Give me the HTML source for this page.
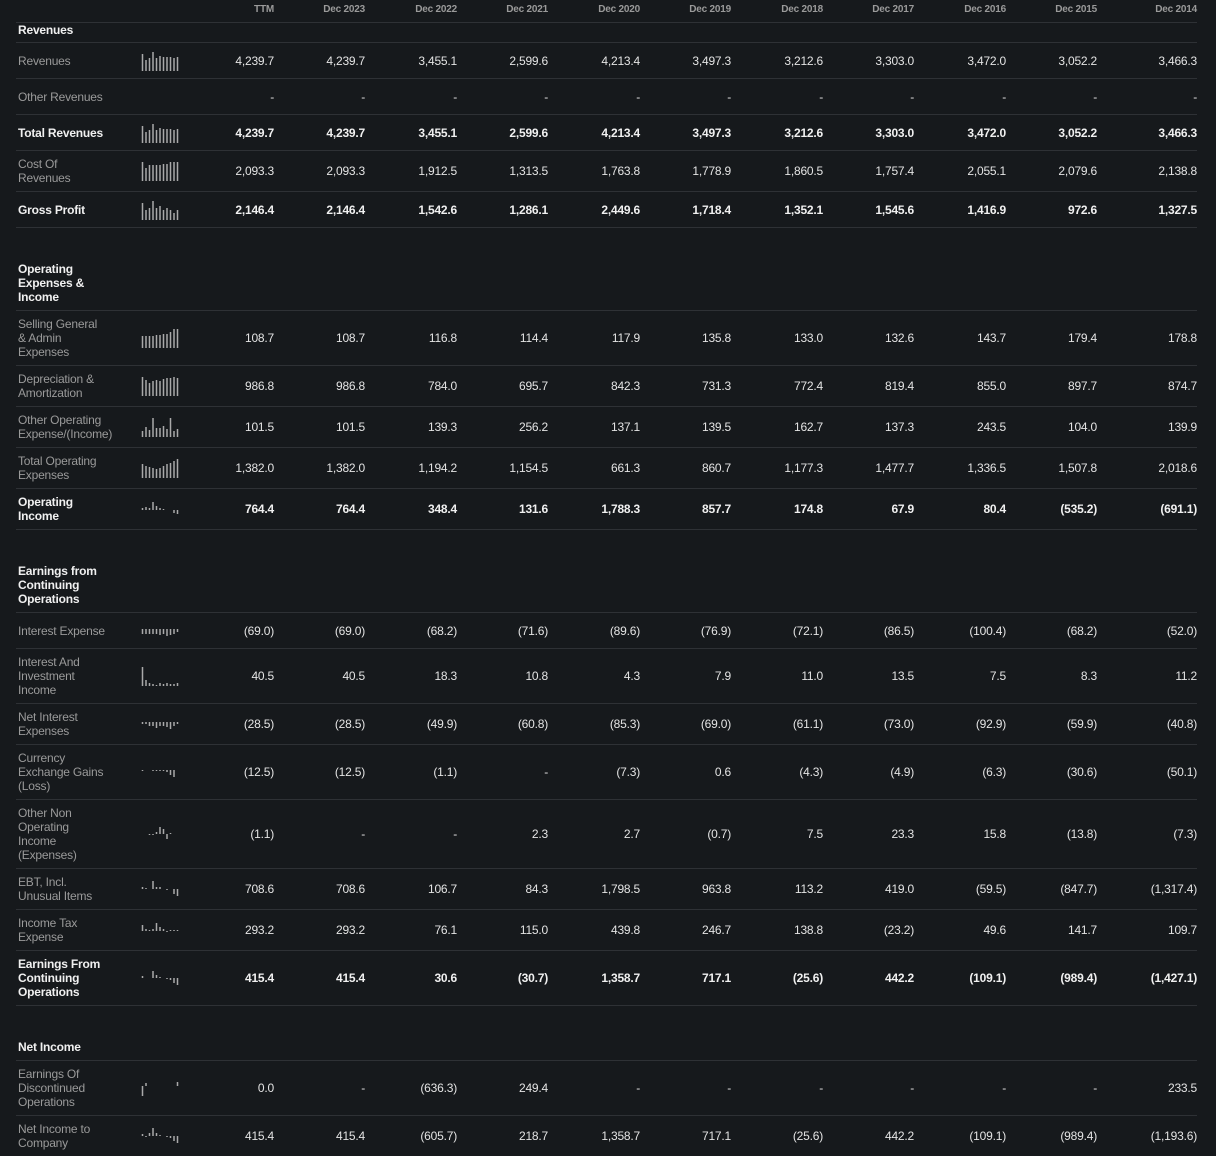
<!DOCTYPE html>
<html><head><meta charset="utf-8">
<style>
*{margin:0;padding:0;box-sizing:border-box}
body{width:1216px;height:1155px;background:#16191c;font-family:"Liberation Sans",Arial,sans-serif;font-size:12px;color:#e4e4e4;position:relative;overflow:hidden}
.r{position:absolute;left:16px;width:1181px;border-bottom:1px solid #2e3135;display:grid;grid-template-columns:2px 123px 40px 93px 91px 92px 91px 92px 91px 92px 91px 92px 91px 100px;align-items:center;letter-spacing:-0.2px}
.r>div{text-align:right;white-space:nowrap}
.r>div.l{text-align:left;color:#9a9a9a;line-height:14px}
.r>div.s{text-align:left}
.b>div{font-weight:bold;color:#f0f0f0}
.b>div.l{color:#f0f0f0}
.h{align-items:end;padding-bottom:6px}
.h>div.l{color:#f0f0f0;font-weight:bold}
.hd>div{font-size:10px;font-weight:bold;color:#9a9a9a}
svg{display:block}
svg path{stroke:#a9a9a9;stroke-width:1.5;fill:none}
</style></head><body>

<div class="r hd" style="top:0;height:23px;align-items:start;padding-top:4px"><div></div><div></div><div></div><div>TTM</div><div>Dec 2023</div><div>Dec 2022</div><div>Dec 2021</div><div>Dec 2020</div><div>Dec 2019</div><div>Dec 2018</div><div>Dec 2017</div><div>Dec 2016</div><div>Dec 2015</div><div>Dec 2014</div></div>

<div class="r h" style="top:23px;height:20px;padding-bottom:6px"><div></div><div class="l">Revenues</div></div>

<div class="r" style="top:43px;height:36px"><div></div><div class="l">Revenues</div><div class="s"><svg width="40" height="24"><path d="M1.5 22V5M5 22V11M8.5 22V9M12 22V3M15.5 22V9M19 22V7M22.5 22V8M26 22V8M29.5 22V8M33 22V9M36.5 22V8"/></svg></div><div>4,239.7</div><div>4,239.7</div><div>3,455.1</div><div>2,599.6</div><div>4,213.4</div><div>3,497.3</div><div>3,212.6</div><div>3,303.0</div><div>3,472.0</div><div>3,052.2</div><div>3,466.3</div></div>

<div class="r" style="top:79px;height:36px"><div></div><div class="l">Other Revenues</div><div></div><div>-</div><div>-</div><div>-</div><div>-</div><div>-</div><div>-</div><div>-</div><div>-</div><div>-</div><div>-</div><div>-</div></div>

<div class="r b" style="top:115px;height:36px"><div></div><div class="l">Total Revenues</div><div class="s"><svg width="40" height="24"><path d="M1.5 22V5M5 22V11M8.5 22V9M12 22V3M15.5 22V9M19 22V7M22.5 22V8M26 22V8M29.5 22V8M33 22V9M36.5 22V8"/></svg></div><div>4,239.7</div><div>4,239.7</div><div>3,455.1</div><div>2,599.6</div><div>4,213.4</div><div>3,497.3</div><div>3,212.6</div><div>3,303.0</div><div>3,472.0</div><div>3,052.2</div><div>3,466.3</div></div>

<div class="r" style="top:151px;height:41px"><div></div><div class="l">Cost Of<br>Revenues</div><div class="s"><svg width="40" height="24"><path d="M1.5 22V3M5 22V9M8.5 22V6M12 22V6M15.5 22V6M19 22V6M22.5 22V5M26 22V5M29.5 22V3M33 22V3M36.5 22V3"/></svg></div><div>2,093.3</div><div>2,093.3</div><div>1,912.5</div><div>1,313.5</div><div>1,763.8</div><div>1,778.9</div><div>1,860.5</div><div>1,757.4</div><div>2,055.1</div><div>2,079.6</div><div>2,138.8</div></div>

<div class="r b" style="top:192px;height:36px"><div></div><div class="l">Gross Profit</div><div class="s"><svg width="40" height="24"><path d="M1.5 22V5M5 22V12M8.5 22V10M12 22V3M15.5 22V10M19 22V8M22.5 22V12M26 22V10M29.5 22V12M33 22V15M36.5 22V12"/></svg></div><div>2,146.4</div><div>2,146.4</div><div>1,542.6</div><div>1,286.1</div><div>2,449.6</div><div>1,718.4</div><div>1,352.1</div><div>1,545.6</div><div>1,416.9</div><div>972.6</div><div>1,327.5</div></div>

<div class="r h" style="top:228px;height:83px"><div></div><div class="l">Operating<br>Expenses &amp;<br>Income</div></div>

<div class="r" style="top:311px;height:55px"><div></div><div class="l">Selling General<br>&amp; Admin<br>Expenses</div><div class="s"><svg width="40" height="24"><path d="M1.5 22V10M5 22V10M8.5 22V10M12 22V10M15.5 22V9M19 22V9M22.5 22V8M26 22V8M29.5 22V6M33 22V3M36.5 22V3"/></svg></div><div>108.7</div><div>108.7</div><div>116.8</div><div>114.4</div><div>117.9</div><div>135.8</div><div>133.0</div><div>132.6</div><div>143.7</div><div>179.4</div><div>178.8</div></div>

<div class="r" style="top:366px;height:41px"><div></div><div class="l">Depreciation &amp;<br>Amortization</div><div class="s"><svg width="40" height="24"><path d="M1.5 22V3M5 22V6M8.5 22V9M12 22V7M15.5 22V6M19 22V7M22.5 22V5M26 22V4M29.5 22V4M33 22V3M36.5 22V4"/></svg></div><div>986.8</div><div>986.8</div><div>784.0</div><div>695.7</div><div>842.3</div><div>731.3</div><div>772.4</div><div>819.4</div><div>855.0</div><div>897.7</div><div>874.7</div></div>

<div class="r" style="top:407px;height:41px"><div></div><div class="l">Other Operating<br>Expense/(Income)</div><div class="s"><svg width="40" height="24"><path d="M1.5 22V16M5 22V12M8.5 22V15M12 22V3M15.5 22V13M19 22V13M22.5 22V11M26 22V14M29.5 22V3M33 22V16M36.5 22V14"/></svg></div><div>101.5</div><div>101.5</div><div>139.3</div><div>256.2</div><div>137.1</div><div>139.5</div><div>162.7</div><div>137.3</div><div>243.5</div><div>104.0</div><div>139.9</div></div>

<div class="r" style="top:448px;height:41px"><div></div><div class="l">Total Operating<br>Expenses</div><div class="s"><svg width="40" height="24"><path d="M1.5 22V8M5 22V10M8.5 22V11M12 22V12M15.5 22V13M19 22V12M22.5 22V10M26 22V8M29.5 22V7M33 22V5M36.5 22V3"/></svg></div><div>1,382.0</div><div>1,382.0</div><div>1,194.2</div><div>1,154.5</div><div>661.3</div><div>860.7</div><div>1,177.3</div><div>1,477.7</div><div>1,336.5</div><div>1,507.8</div><div>2,018.6</div></div>

<div class="r b" style="top:489px;height:41px"><div></div><div class="l">Operating<br>Income</div><div class="s"><svg width="40" height="24"><path d="M1.5 13V11M5 13V10M8.5 13V11M12 13V5M15.5 13V9M19 13V11M22.5 13V12M33 13V16M36.5 13V17"/></svg></div><div>764.4</div><div>764.4</div><div>348.4</div><div>131.6</div><div>1,788.3</div><div>857.7</div><div>174.8</div><div>67.9</div><div>80.4</div><div>(535.2)</div><div>(691.1)</div></div>

<div class="r h" style="top:530px;height:83px"><div></div><div class="l">Earnings from<br>Continuing<br>Operations</div></div>

<div class="r" style="top:613px;height:36px"><div></div><div class="l">Interest Expense</div><div class="s"><svg width="40" height="24"><path d="M1.5 10V15M5 10V15M8.5 10V15M12 10V15M15.5 10V15M19 10V16M22.5 10V15M26 10V17M29.5 10V16M33 10V15M36.5 10V13"/></svg></div><div>(69.0)</div><div>(69.0)</div><div>(68.2)</div><div>(71.6)</div><div>(89.6)</div><div>(76.9)</div><div>(72.1)</div><div>(86.5)</div><div>(100.4)</div><div>(68.2)</div><div>(52.0)</div></div>

<div class="r" style="top:649px;height:55px"><div></div><div class="l">Interest And<br>Investment<br>Income</div><div class="s"><svg width="40" height="24"><path d="M1.5 22V3M5 22V16M8.5 22V19M12 22V20M15.5 22V21M19 22V19M22.5 22V20M26 22V19M29.5 22V20M33 22V20M36.5 22V19"/></svg></div><div>40.5</div><div>40.5</div><div>18.3</div><div>10.8</div><div>4.3</div><div>7.9</div><div>11.0</div><div>13.5</div><div>7.5</div><div>8.3</div><div>11.2</div></div>

<div class="r" style="top:704px;height:41px"><div></div><div class="l">Net Interest<br>Expenses</div><div class="s"><svg width="40" height="24"><path d="M1.5 10V12M5 10V12M8.5 10V14M12 10V14M15.5 10V16M19 10V14M22.5 10V14M26 10V15M29.5 10V17M33 10V14M36.5 10V12"/></svg></div><div>(28.5)</div><div>(28.5)</div><div>(49.9)</div><div>(60.8)</div><div>(85.3)</div><div>(69.0)</div><div>(61.1)</div><div>(73.0)</div><div>(92.9)</div><div>(59.9)</div><div>(40.8)</div></div>

<div class="r" style="top:745px;height:55px"><div></div><div class="l">Currency<br>Exchange Gains<br>(Loss)</div><div class="s"><svg width="40" height="24"><path d="M1.5 10V11M12 10V11M15.5 10V11M19 10V11M22.5 10V11M26 10V12M29.5 10V15M33 10V17"/></svg></div><div>(12.5)</div><div>(12.5)</div><div>(1.1)</div><div>-</div><div>(7.3)</div><div>0.6</div><div>(4.3)</div><div>(4.9)</div><div>(6.3)</div><div>(30.6)</div><div>(50.1)</div></div>

<div class="r" style="top:800px;height:69px"><div></div><div class="l">Other Non<br>Operating<br>Income<br>(Expenses)</div><div class="s"><svg width="40" height="24"><path d="M8.5 12V13M12 12V13M15.5 12V10M19 12V5M22.5 12V7M26 12V17M29.5 12V11"/></svg></div><div>(1.1)</div><div>-</div><div>-</div><div>2.3</div><div>2.7</div><div>(0.7)</div><div>7.5</div><div>23.3</div><div>15.8</div><div>(13.8)</div><div>(7.3)</div></div>

<div class="r" style="top:869px;height:41px"><div></div><div class="l">EBT, Incl.<br>Unusual Items</div><div class="s"><svg width="40" height="24"><path d="M1.5 12V10M5 12V11M12 12V4M15.5 12V10M19 12V10M26 12V13M33 12V17M36.5 12V19"/></svg></div><div>708.6</div><div>708.6</div><div>106.7</div><div>84.3</div><div>1,798.5</div><div>963.8</div><div>113.2</div><div>419.0</div><div>(59.5)</div><div>(847.7)</div><div>(1,317.4)</div></div>

<div class="r" style="top:910px;height:41px"><div></div><div class="l">Income Tax<br>Expense</div><div class="s"><svg width="40" height="24"><path d="M1.5 13V7M5 13V11M8.5 13V12M12 13V11M15.5 13V5M19 13V9M22.5 13V11M26 13V14M29.5 13V12M33 13V12M36.5 13V12"/></svg></div><div>293.2</div><div>293.2</div><div>76.1</div><div>115.0</div><div>439.8</div><div>246.7</div><div>138.8</div><div>(23.2)</div><div>49.6</div><div>141.7</div><div>109.7</div></div>

<div class="r b" style="top:951px;height:55px"><div></div><div class="l">Earnings From<br>Continuing<br>Operations</div><div class="s"><svg width="40" height="24"><path d="M1.5 12V10M12 12V5M15.5 12V9M19 12V11M26 12V13M29.5 12V14M33 12V17M36.5 12V19"/></svg></div><div>415.4</div><div>415.4</div><div>30.6</div><div>(30.7)</div><div>1,358.7</div><div>717.1</div><div>(25.6)</div><div>442.2</div><div>(109.1)</div><div>(989.4)</div><div>(1,427.1)</div></div>

<div class="r h" style="top:1006px;height:55px"><div></div><div class="l">Net Income</div></div>

<div class="r" style="top:1061px;height:55px"><div></div><div class="l">Earnings Of<br>Discontinued<br>Operations</div><div class="s"><svg width="40" height="24"><path d="M1.5 20V10M5 10V7M36.5 10V6"/></svg></div><div>0.0</div><div>-</div><div>(636.3)</div><div>249.4</div><div>-</div><div>-</div><div>-</div><div>-</div><div>-</div><div>-</div><div>233.5</div></div>

<div class="r" style="top:1116px;height:40px;border-bottom:none"><div></div><div class="l">Net Income to<br>Company</div><div class="s"><svg width="40" height="24"><path d="M1.5 12V10M5 12V13M8.5 12V9M12 12V4M15.5 12V9M19 12V11M26 12V13M29.5 12V14M33 12V17M36.5 12V19"/></svg></div><div>415.4</div><div>415.4</div><div>(605.7)</div><div>218.7</div><div>1,358.7</div><div>717.1</div><div>(25.6)</div><div>442.2</div><div>(109.1)</div><div>(989.4)</div><div>(1,193.6)</div></div>

</body></html>
